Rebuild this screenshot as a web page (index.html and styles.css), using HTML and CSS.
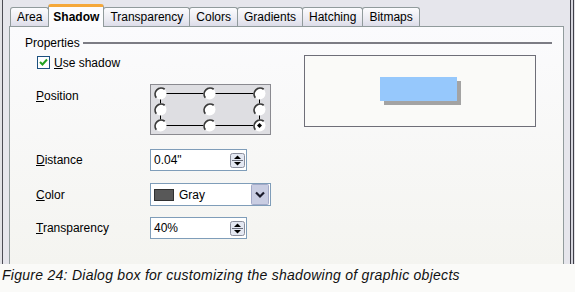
FILE: index.html
```html
<!DOCTYPE html>
<html>
<head>
<meta charset="utf-8">
<link rel="stylesheet" href="styles.css">
</head>
<body>
<div class="dialog">
  <div class="tabs">
    <div class="tab">Area</div>
    <div class="tab active">Shadow</div>
    <div class="tab">Transparency</div>
    <div class="tab">Colors</div>
    <div class="tab">Gradients</div>
    <div class="tab">Hatching</div>
    <div class="tab">Bitmaps</div>
  </div>
  <div class="panel">
    <div class="legend"><span>Properties</span><span class="rule"></span></div>
    <div class="body">
      <div class="form">
        <div class="check-row">
          <span class="checkbox"><svg width="11" height="11" viewBox="0 0 11 11"><path d="M2 5 L4.5 7.5 L9 2.5" fill="none" stroke="#21a121" stroke-width="2"/></svg></span>
          <span class="check-label"><u>U</u>se shadow</span>
        </div>
        <div class="row pos-row">
          <span class="label top"><u>P</u>osition</span>
          <div class="pos-box">
            <svg width="119" height="49" viewBox="0 0 119 49">
              <g stroke="#000" stroke-width="1">
                <line x1="9" y1="8.5" x2="108" y2="8.5"/>
                <line x1="9" y1="40.5" x2="108" y2="40.5"/>
                <line x1="9.5" y1="8" x2="9.5" y2="40"/>
                <line x1="108.5" y1="8" x2="108.5" y2="40"/>
              </g>
              <g>
                <g transform="translate(9.5 8.5)"><circle r="6" fill="#fff"/><path d="M-4.2 4.2 A6 6 0 0 1 4.2 -4.2" fill="none" stroke="#3a3a3a" stroke-width="1.8"/></g>
                <g transform="translate(58.5 8.5)"><circle r="6" fill="#fff"/><path d="M-4.2 4.2 A6 6 0 0 1 4.2 -4.2" fill="none" stroke="#3a3a3a" stroke-width="1.8"/></g>
                <g transform="translate(108.5 8.5)"><circle r="6" fill="#fff"/><path d="M-4.2 4.2 A6 6 0 0 1 4.2 -4.2" fill="none" stroke="#3a3a3a" stroke-width="1.8"/></g>
                <g transform="translate(9.5 24.5)"><circle r="6" fill="#fff"/><path d="M-4.2 4.2 A6 6 0 0 1 4.2 -4.2" fill="none" stroke="#3a3a3a" stroke-width="1.8"/></g>
                <g transform="translate(58.5 24.5)"><circle r="6" fill="#fff"/><path d="M-4.2 4.2 A6 6 0 0 1 4.2 -4.2" fill="none" stroke="#3a3a3a" stroke-width="1.8"/></g>
                <g transform="translate(108.5 24.5)"><circle r="6" fill="#fff"/><path d="M-4.2 4.2 A6 6 0 0 1 4.2 -4.2" fill="none" stroke="#3a3a3a" stroke-width="1.8"/></g>
                <g transform="translate(9.5 40.5)"><circle r="6" fill="#fff"/><path d="M-4.2 4.2 A6 6 0 0 1 4.2 -4.2" fill="none" stroke="#3a3a3a" stroke-width="1.8"/></g>
                <g transform="translate(58.5 40.5)"><circle r="6" fill="#fff"/><path d="M-4.2 4.2 A6 6 0 0 1 4.2 -4.2" fill="none" stroke="#3a3a3a" stroke-width="1.8"/></g>
                <g transform="translate(108.5 40.5)"><circle r="6" fill="#fff"/><path d="M-4.2 4.2 A6 6 0 0 1 4.2 -4.2" fill="none" stroke="#3a3a3a" stroke-width="1.8"/><path d="M0 -2.5 L2.5 0 L0 2.5 L-2.5 0 Z" fill="#000"/></g>
              </g>
            </svg>
          </div>
        </div>
        <div class="row r-dist">
          <span class="label"><u>D</u>istance</span>
          <div class="field">0.04"
            <span class="spin"><svg width="15" height="15" viewBox="0 0 15 15"><rect x="0.5" y="0.5" width="14" height="14" rx="2" fill="#e4e8f2" stroke="#8a8e9c"/><line x1="2" y1="7.5" x2="13" y2="7.5" stroke="#6a6e7c"/><path d="M4 6 L7.5 2.5 L11 6 Z" fill="#000"/><path d="M4 9 L7.5 12.5 L11 9 Z" fill="#000"/></svg></span>
          </div>
        </div>
        <div class="row r-color">
          <span class="label"><u>C</u>olor</span>
          <div class="listbox">
            <span class="swatch"></span><span class="lb-text">Gray</span>
            <span class="drop"><svg width="18" height="21" viewBox="0 0 18 21"><rect x="0.5" y="0.5" width="17" height="20" rx="1" fill="#c9cde2" stroke="#a4aac8"/><path d="M5 8.5 L9 12.5 L13 8.5" fill="none" stroke="#1a1a2a" stroke-width="2.2"/></svg></span>
          </div>
        </div>
        <div class="row r-trans">
          <span class="label"><u>T</u>ransparency</span>
          <div class="field">40%
            <span class="spin"><svg width="15" height="15" viewBox="0 0 15 15"><rect x="0.5" y="0.5" width="14" height="14" rx="2" fill="#e4e8f2" stroke="#8a8e9c"/><line x1="2" y1="7.5" x2="13" y2="7.5" stroke="#6a6e7c"/><path d="M4 6 L7.5 2.5 L11 6 Z" fill="#000"/><path d="M4 9 L7.5 12.5 L11 9 Z" fill="#000"/></svg></span>
          </div>
        </div>
      </div>
      <div class="preview"><div class="obj"></div></div>
    </div>
  </div>
</div>
<p class="caption">Figure 24: Dialog box for customizing the shadowing of graphic objects</p>
</body>
</html>
```
FILE: styles.css
```css
html, body {
  margin: 0;
  padding: 0;
  background: #fafaf8;
}
body {
  width: 575px;
  height: 292px;
  overflow: hidden;
  font-family: "Liberation Sans", Arial, sans-serif;
  font-size: 12px;
  color: #000;
}
.dialog {
  box-sizing: border-box;
  height: 264px;
  padding: 4px 11px 0 9px;
  background: #e6e6ec;
  box-shadow:
    inset 2px 0 0 #e2e2e6,
    inset 3px 0 0 #4c4c54,
    inset -1px 0 0 #e2e2e6,
    inset -2px 0 0 #3e3e48,
    inset -4px 0 0 #d6d6de,
    inset -5px 0 0 #3e3e48;
  display: flex;
  flex-direction: column;
}
.tabs {
  display: flex;
  align-items: flex-end;
  height: 22px;
  padding-left: 1px;
  position: relative;
  z-index: 1;
}
.tab {
  box-sizing: border-box;
  height: 19px;
  padding: 0 6px;
  line-height: 18px;
  border: 1px solid #919b9c;
  border-bottom: none;
  border-radius: 3px 3px 0 0;
  background: linear-gradient(#fcfcfe, #e8e8f0 70%, #dcdce8);
  white-space: nowrap;
}
.tab + .tab { margin-left: -1px; }
.tab.active {
  height: 23px;
  margin-bottom: -1px;
  padding: 2px 4px 0;
  font-weight: bold;
  background: #fcfcfe;
  border-top: 3px solid #f5a83a;
  line-height: 17px;
}
.panel {
  box-sizing: border-box;
  flex: 1;
  border: 1px solid #919b9c;
  border-bottom: none;
  background: linear-gradient(#fbfbfd, #f4f4f0);
  padding: 9px 11px 0 15px;
}
.legend {
  display: flex;
  align-items: center;
  height: 14px;
  line-height: 14px;
}
.rule {
  flex: 1;
  height: 2px;
  margin-left: 3px;
  background: #7c7c84;
}
.body {
  display: flex;
  padding-left: 11px;
}
.form {
  width: 268px;
  display: flex;
  flex-direction: column;
}
.check-row {
  display: flex;
  align-items: center;
  margin-top: 6px;
  height: 13px;
}
.checkbox {
  box-sizing: border-box;
  width: 13px;
  height: 13px;
  margin-left: 1px;
  border: 1px solid #1c5180;
  background: #fff;
  display: flex;
}
.check-label { margin-left: 4px; }
.row {
  display: flex;
  align-items: center;
}
.label { width: 114px; }
.label.top { align-self: flex-start; margin-top: 5px; line-height: 14px; }
.pos-row { margin-top: 15px; }
.pos-box {
  width: 119px;
  height: 49px;
  border: 1px solid #8a8a90;
  background: #dedee2;
  display: flex;
}
.r-dist { margin-top: 14px; }
.r-color { margin-top: 12px; }
.r-trans { margin-top: 11px; }
.field {
  box-sizing: border-box;
  width: 97px;
  height: 22px;
  border: 1px solid #7f9db9;
  background: #fff;
  padding-left: 3px;
  display: flex;
  align-items: center;
}
.spin {
  margin-left: auto;
  margin-right: 1px;
  display: flex;
}
.listbox {
  box-sizing: border-box;
  width: 121px;
  height: 23px;
  border: 1px solid #7f9db9;
  background: #fff;
  padding-left: 3px;
  display: flex;
  align-items: center;
}
.swatch {
  box-sizing: border-box;
  width: 20px;
  height: 12px;
  border: 1px solid #303030;
  background: #585858;
}
.lb-text { margin-left: 5px; }
.drop {
  margin-left: auto;
  margin-right: 1px;
  display: flex;
}
.preview {
  box-sizing: border-box;
  width: 232px;
  height: 72px;
  margin-top: 5px;
  border: 1px solid #6e6e78;
  background: #fafaf8;
  display: flex;
  align-items: center;
  justify-content: center;
}
.obj {
  width: 77px;
  height: 24px;
  margin: 0 3px 4px 0;
  background: #96c8fc;
  box-shadow: 4px 4px 0 #a3a3a3;
}
.caption {
  margin: 3px 0 0 2px;
  font-style: italic;
  font-size: 14px;
  line-height: 16px;
  letter-spacing: 0.27px;
  color: #111;
}
```
